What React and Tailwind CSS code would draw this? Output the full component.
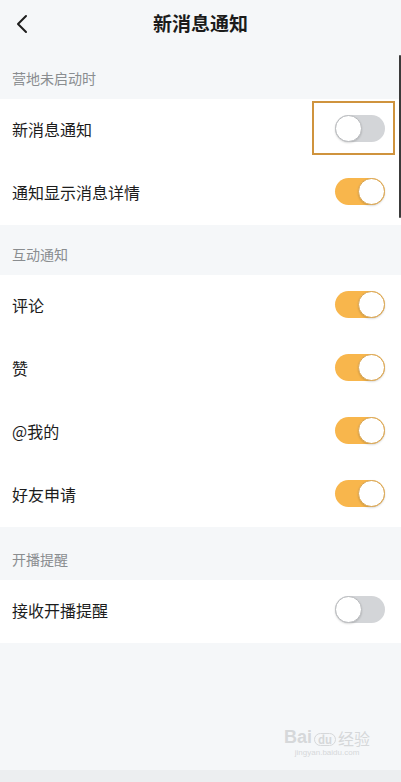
import React, { useState } from "react";

const Toggle = ({ on, onChange }) => (
  <button
    onClick={onChange}
    className={`relative w-[50px] h-[27px] rounded-full transition-colors ${
      on ? "bg-[#f8b64c]" : "bg-[#d3d5d8]"
    }`}
  >
    <span
      className={`absolute top-0 w-[27px] h-[27px] rounded-full bg-white border shadow-[0_1px_2px_rgba(0,0,0,0.15)] transition-all ${
        on ? "left-[23px] border-[#d9a552]" : "left-0 border-[#b9bbbe]"
      }`}
    />
  </button>
);

const Row = ({ label, on, onChange, highlight }) => (
  <div className="flex items-center justify-between h-[63px] pl-3 pr-4 bg-white">
    <span className="text-[16px] text-[#1c1c1c] pb-[4px]">{label}</span>
    <div className="relative">
      {highlight && (
        <div className="absolute -left-[23px] -top-[14px] w-[83px] h-[54px] border-2 border-[#cf933d]" />
      )}
      <Toggle on={on} onChange={onChange} />
    </div>
  </div>
);

const SectionTitle = ({ text }) => (
  <div className="h-[50px] pl-3 pt-[19px] text-[14px] text-[#8a8d90]">{text}</div>
);

export default function App() {
  const [state, setState] = useState({
    newMsg: false,
    detail: true,
    comment: true,
    like: true,
    mention: true,
    friend: true,
    live: false,
  });

  const flip = (key) => setState((s) => ({ ...s, [key]: !s[key] }));

  return (
    <div
      className="relative flex flex-col h-[782px] bg-[#f5f7f9] overflow-hidden"
      style={{ fontFamily: '"Noto Sans CJK SC", "Noto Sans", sans-serif' }}
    >
      {/* header */}
      <div className="relative flex items-center justify-center h-[49px]">
        <svg
          className="absolute left-[14px] top-[14px]"
          width="16"
          height="20"
          viewBox="0 0 16 20"
          fill="none"
        >
          <path d="M12 2 L4 10 L12 18" stroke="#1d1d1d" strokeWidth="2" strokeLinecap="round" strokeLinejoin="round" />
        </svg>
        <h1 className="text-[19px] font-semibold text-[#1b1b1b] mt-[-2px]">新消息通知</h1>
      </div>

      <SectionTitle text="营地未启动时" />
      <div className="flex flex-col">
        <Row label="新消息通知" on={state.newMsg} onChange={() => flip("newMsg")} highlight />
        <Row label="通知显示消息详情" on={state.detail} onChange={() => flip("detail")} />
      </div>

      <SectionTitle text="互动通知" />
      <div className="flex flex-col">
        <Row label="评论" on={state.comment} onChange={() => flip("comment")} />
        <Row label="赞" on={state.like} onChange={() => flip("like")} />
        <Row label="@我的" on={state.mention} onChange={() => flip("mention")} />
        <Row label="好友申请" on={state.friend} onChange={() => flip("friend")} />
      </div>

      <div className="h-[3px]" />
      <SectionTitle text="开播提醒" />
      <div className="flex flex-col">
        <Row label="接收开播提醒" on={state.live} onChange={() => flip("live")} />
      </div>

      <div className="flex-1" />
      <div className="h-[12px] bg-[#eceef0]" />

      {/* scrollbar */}
      <div className="absolute right-0 top-[55px] w-[2px] h-[163px] bg-[#3a3a3a] rounded-full" />

      {/* watermark */}
      <div className="absolute left-[284px] top-[728px] flex flex-col items-center text-[#d6d8da] leading-none">
        <div className="flex items-end gap-[2px]">
          <span className="text-[18px] font-bold" style={{ fontFamily: '"Liberation Sans", sans-serif' }}>Bai</span>
          <span className="px-[3px] rounded-full border border-[#d6d8da] text-[11px] font-bold">du</span>
          <span className="text-[16px]">经验</span>
        </div>
        <span className="text-[8px] mt-[3px]" style={{ fontFamily: '"Liberation Sans", sans-serif' }}>jingyan.baidu.com</span>
      </div>
    </div>
  );
}
